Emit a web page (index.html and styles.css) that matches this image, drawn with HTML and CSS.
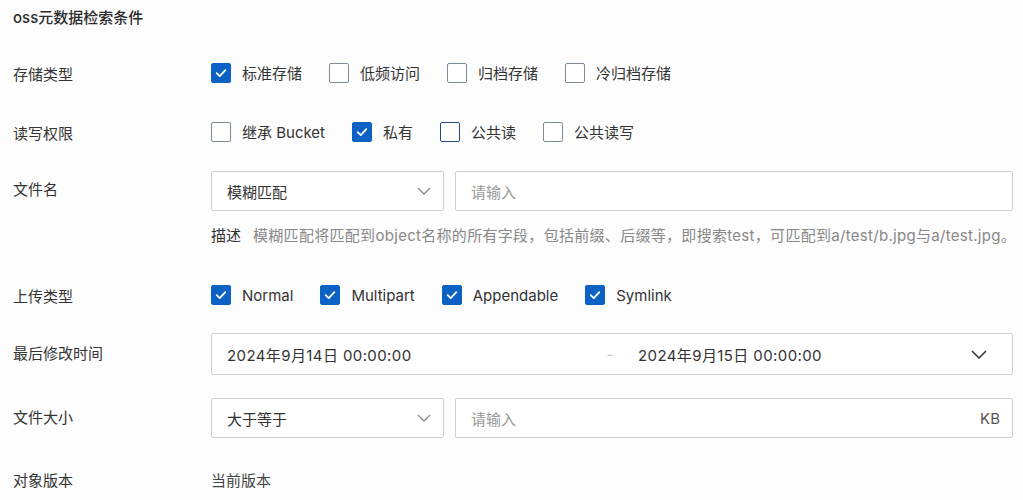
FILE: index.html
```html
<!DOCTYPE html>
<html lang="zh-CN">
<head>
<meta charset="utf-8">
<title>oss元数据检索条件</title>
<link rel="stylesheet" href="styles.css">
</head>
<body>
<div class="form">
  <div class="title">oss元数据检索条件</div>

  <div class="row">
    <div class="label">存储类型</div>
    <div class="control checks">
      <span class="check"><span class="box checked"><svg viewBox="0 0 20 20"><path d="M5.2 10.2 L8.6 13.4 L14.8 6.8"/></svg></span>标准存储</span>
      <span class="check"><span class="box"></span>低频访问</span>
      <span class="check"><span class="box"></span>归档存储</span>
      <span class="check"><span class="box"></span>冷归档存储</span>
    </div>
  </div>

  <div class="row">
    <div class="label">读写权限</div>
    <div class="control checks">
      <span class="check"><span class="box"></span>继承 Bucket</span>
      <span class="check"><span class="box checked"><svg viewBox="0 0 20 20"><path d="M5.2 10.2 L8.6 13.4 L14.8 6.8"/></svg></span>私有</span>
      <span class="check"><span class="box hover"></span>公共读</span>
      <span class="check"><span class="box"></span>公共读写</span>
    </div>
  </div>

  <div class="row row-top">
    <div class="label">文件名</div>
    <div class="control stack">
      <div class="pair">
        <div class="select"><span>模糊匹配</span><svg class="chev" viewBox="0 0 14 8"><path d="M1 1 L7 7 L13 1"/></svg></div>
        <div class="input"><span class="ph">请输入</span></div>
      </div>
      <div class="desc"><span class="desc-k">描述</span><span class="desc-v">模糊匹配将匹配到object名称的所有字段，包括前缀、后缀等，即搜索test，可匹配到a/test/b.jpg与a/test.jpg。</span></div>
    </div>
  </div>

  <div class="row">
    <div class="label">上传类型</div>
    <div class="control checks">
      <span class="check"><span class="box checked"><svg viewBox="0 0 20 20"><path d="M5.2 10.2 L8.6 13.4 L14.8 6.8"/></svg></span>Normal</span>
      <span class="check"><span class="box checked"><svg viewBox="0 0 20 20"><path d="M5.2 10.2 L8.6 13.4 L14.8 6.8"/></svg></span>Multipart</span>
      <span class="check"><span class="box checked"><svg viewBox="0 0 20 20"><path d="M5.2 10.2 L8.6 13.4 L14.8 6.8"/></svg></span>Appendable</span>
      <span class="check"><span class="box checked"><svg viewBox="0 0 20 20"><path d="M5.2 10.2 L8.6 13.4 L14.8 6.8"/></svg></span>Symlink</span>
    </div>
  </div>

  <div class="row row-date">
    <div class="label">最后修改时间</div>
    <div class="control">
      <div class="range">
        <span class="r-start">2024年9月14日 00:00:00</span>
        <span class="r-sep">-</span>
        <span class="r-end">2024年9月15日 00:00:00</span>
        <svg class="chev dark" viewBox="0 0 16 9"><path d="M1 1 L8 8 L15 1"/></svg>
      </div>
    </div>
  </div>

  <div class="row row-size">
    <div class="label">文件大小</div>
    <div class="control">
      <div class="pair">
        <div class="select"><span>大于等于</span><svg class="chev" viewBox="0 0 14 8"><path d="M1 1 L7 7 L13 1"/></svg></div>
        <div class="input"><span class="ph">请输入</span><span class="unit">KB</span></div>
      </div>
    </div>
  </div>

  <div class="row">
    <div class="label">对象版本</div>
    <div class="control"><span class="value">当前版本</span></div>
  </div>
</div>
</body>
</html>
```

FILE: styles.css
```css
* { box-sizing: border-box; }
html, body {
  margin: 0;
  background: #fdfdfd;
}
body {
  font-family: Inter, "Noto Sans CJK SC", sans-serif;
  font-size: 15px;
  color: #333;
}
.form {
  padding: 8px 10px 0 13px;
}
.title {
  height: 20px;
  line-height: 20px;
  font-weight: 500;
  color: #2b2b2b;
  margin-bottom: 25px;
}
.row {
  display: flex;
  align-items: center;
  min-height: 40px;
  margin-bottom: 19px;
}
.row-top { align-items: flex-start; }
.row-top .label { line-height: 38px; }
.row-date { margin-top: -1px; margin-bottom: 23px; }
.row-date .label { margin-top: -3px; }
.row-size { margin-bottom: 21px; }
.row-size .label { margin-top: -3px; }
.label {
  width: 198px;
  flex: none;
  color: #333;
}
.control {
  flex: 1;
  min-width: 0;
}
.checks {
  display: flex;
  align-items: center;
  gap: 27px;
}
.check {
  display: inline-flex;
  align-items: center;
  gap: 11px;
  color: #333;
  line-height: 20px;
  padding-top: 1px;
}
.box {
  width: 20px;
  height: 20px;
  border: 1px solid #7e8b99;
  border-radius: 2px;
  background: #fff;
  flex: none;
  display: inline-flex;
  align-items: center;
  justify-content: center;
  margin-top: -1px;
}
.box.hover { border: 1.5px solid #274c7c; }
.box.checked {
  background: #0b62c4;
  border-color: #0b62c4;
}
.box svg {
  width: 20px;
  height: 20px;
}
.box svg path {
  fill: none;
  stroke: #fff;
  stroke-width: 2;
  stroke-linecap: round;
  stroke-linejoin: round;
}
.stack {
  display: flex;
  flex-direction: column;
}
.pair {
  display: flex;
  gap: 11px;
}
.select, .input {
  height: 40px;
  border: 1px solid #cfcfcf;
  border-radius: 2px;
  background: #fff;
  display: flex;
  align-items: center;
  padding: 0 12px 0 15px;
}
.select {
  width: 233px;
  flex: none;
  justify-content: space-between;
  color: #333;
}
.input {
  flex: 1;
  justify-content: space-between;
}
.ph { color: #999; }
.unit { color: #555; }
.chev {
  width: 14px;
  height: 8px;
}
.chev path {
  fill: none;
  stroke: #8a8a8a;
  stroke-width: 1.3;
}
.chev.dark {
  width: 16px;
  height: 9px;
}
.chev.dark path {
  stroke: #333;
  stroke-width: 1.5;
}
.desc {
  margin-top: 15px;
  margin-bottom: 10px;
  line-height: 20px;
  white-space: nowrap;
}
.desc-k { color: #333; margin-right: 12px; }
.desc-v { color: #888; letter-spacing: 0.3px; }
.range {
  height: 42px;
  border: 1px solid #cfcfcf;
  border-radius: 2px;
  background: #fff;
  display: grid;
  grid-template-columns: 386px 24px 1fr 42px;
  align-items: center;
  color: #333;
}
.r-start, .r-end { letter-spacing: 0.4px; }
.r-start { padding-left: 15px; }
.r-sep { text-align: center; color: #c4c4c4; }
.r-end { padding-left: 16px; }
.range .chev { justify-self: start; margin-left: 1px; }
.value { color: #444; }
```
